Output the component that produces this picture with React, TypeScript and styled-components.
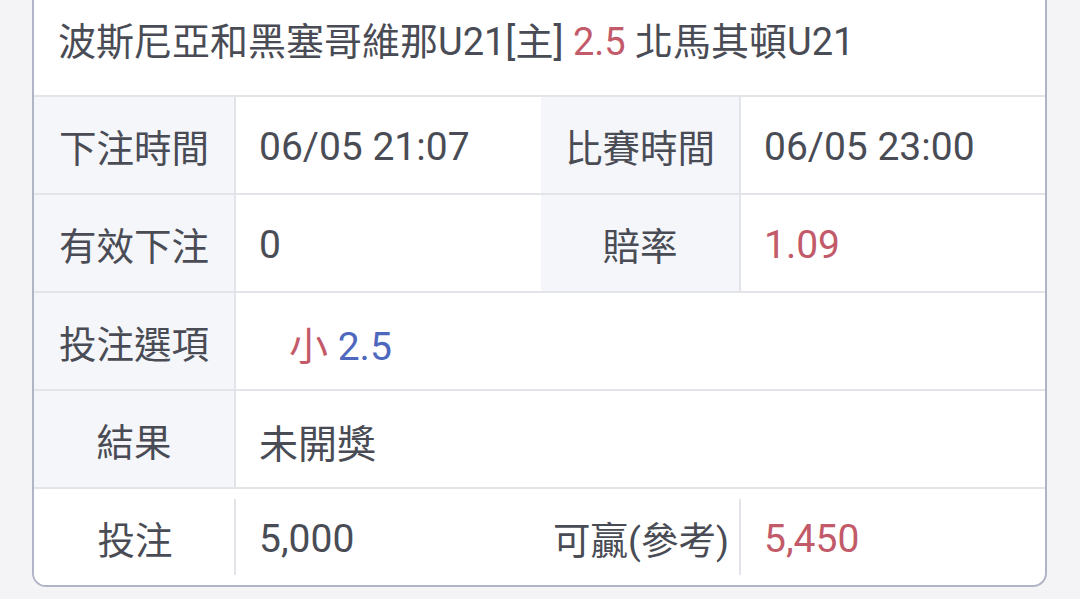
import * as React from 'react';
import styled, { createGlobalStyle } from 'styled-components';

const GlobalStyle = createGlobalStyle`
  html, body {
    margin: 0;
    padding: 0;
    background: #f4f4f6;
    font-family: Roboto, "Noto Sans CJK TC", sans-serif;
    color: #4a4c55;
  }
`;

const Page = styled.div`
  width: 1080px;
  height: 599px;
  overflow: hidden;
  padding: 0 33px 0 32px;
  box-sizing: border-box;
`;

const Card = styled.div`
  margin-top: -21px;
  background: #ffffff;
  border: 2px solid #b1b3c7;
  border-radius: 14px;
  overflow: hidden;
`;

const Title = styled.div`
  height: 114px;
  display: flex;
  align-items: center;
  padding: 0 24px 0 24px;
  font-size: 38px;
  white-space: pre;
  border-bottom: 2px solid #e3e4ea;
`;

const Red = styled.span`
  color: #c25a69;
`;

const Blue = styled.span`
  color: #4d68bd;
`;

const Grid = styled.div`
  display: grid;
  grid-template-columns: 202px 305px 200px 1fr;
`;

const Label = styled.div<{ $plain?: boolean }>`
  height: 96px;
  display: flex;
  align-items: center;
  justify-content: center;
  font-size: 37.5px;
  background: ${(p) => (p.$plain ? '#ffffff' : '#f5f6fa')};
  border-bottom: ${(p) => (p.$plain ? 'none' : '2px solid #e3e4ea')};
  border-right: ${(p) => (p.$plain ? 'none' : '2px solid #e3e4ea')};
  position: relative;
  ${(p) =>
    p.$plain &&
    `
    &::after {
      content: '';
      position: absolute;
      right: 0;
      top: 10px;
      bottom: 10px;
      width: 2px;
      background: #e3e4ea;
    }
  `}
`;

const Value = styled.div<{ $plain?: boolean; $span?: number; $indent?: number }>`
  height: 96px;
  box-sizing: border-box;
  display: flex;
  align-items: center;
  padding: 4px 0 0 ${(p) => 23 + (p.$indent ?? 0)}px;
  font-size: 39px;
  white-space: pre;
  grid-column: ${(p) => (p.$span ? `span ${p.$span}` : 'auto')};
  border-bottom: ${(p) => (p.$plain ? 'none' : '2px solid #e3e4ea')};
  ${(p) => !p.$plain && 'height: 98px;'}
`;

export default function App() {
  return (
    <Page>
      <GlobalStyle />
      <Card>
        <Title>
          <span>
            波斯尼亞和黑塞哥維那U21[主] <Red>2.5</Red> 北馬其頓U21
          </span>
        </Title>
        <Grid>
          <Label>下注時間</Label>
          <Value>06/05 21:07</Value>
          <Label>比賽時間</Label>
          <Value>06/05 23:00</Value>

          <Label>有效下注</Label>
          <Value>0</Value>
          <Label>賠率</Label>
          <Value>
            <Red>1.09</Red>
          </Value>

          <Label>投注選項</Label>
          <Value $span={3} $indent={30}>
            <span>
              <Red>小</Red> <Blue>2.5</Blue>
            </span>
          </Value>

          <Label>結果</Label>
          <Value $span={3}>未開獎</Value>

          <Label $plain>投注</Label>
          <Value $plain>5,000</Value>
          <Label $plain>可贏(參考)</Label>
          <Value $plain>
            <Red>5,450</Red>
          </Value>
        </Grid>
      </Card>
    </Page>
  );
}
